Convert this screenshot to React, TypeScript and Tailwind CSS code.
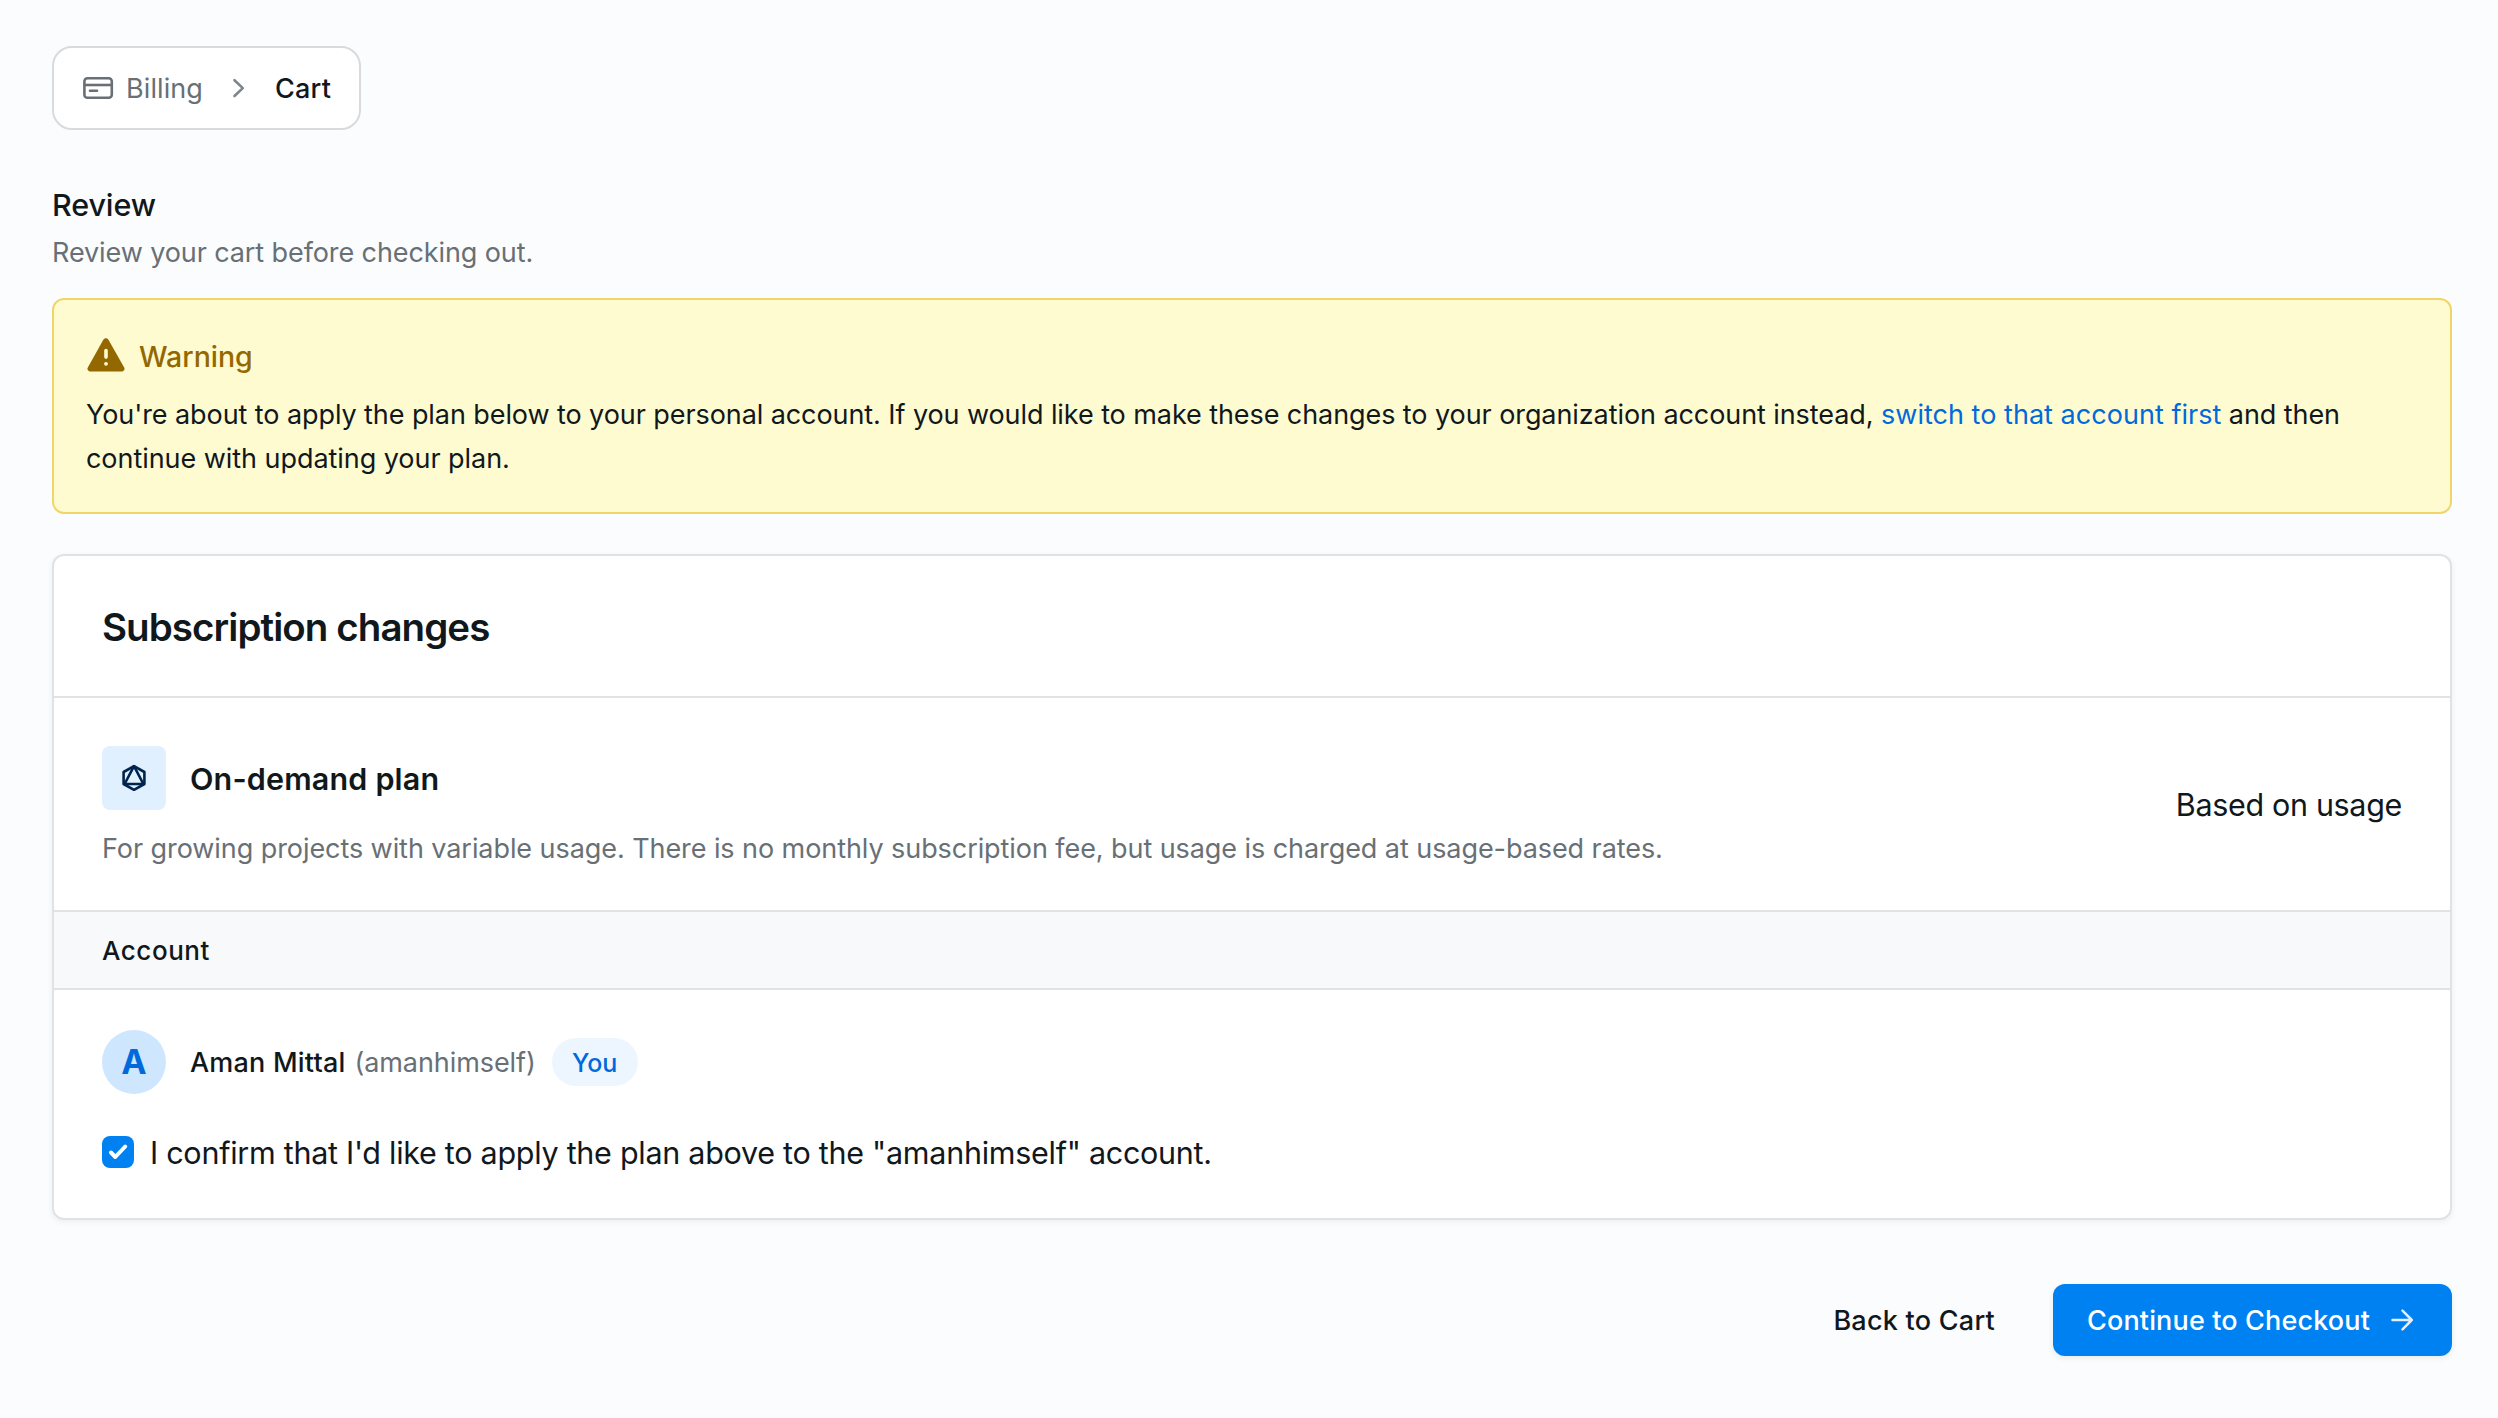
function CardIcon() {
  return (
    <svg className="h-8 w-8" viewBox="0 0 32 32" fill="none" stroke="currentColor" strokeWidth="2.6">
      <rect x="2.4" y="6.2" width="27.4" height="19.6" rx="3" />
      <path d="M2.4 13h27.4" />
      <path d="M8 18.700h7" strokeLinecap="round" />
    </svg>
  );
}

function WarningIcon() {
  return (
    <svg className="h-[34px] w-[38px]" viewBox="0 0 38 34">
      <path
        d="M16.200 1.900c1.200-2.100 4.200-2.100 5.400 0l15.600 27.600c1 1.800-.2 4-2.300 4H3.100c-2.100 0-3.300-2.200-2.300-4z"
        fill="#946800"
      />
      <path d="M19 12.600v6.500" stroke="#fffbd1" strokeWidth="3.600" strokeLinecap="round" />
      <circle cx="19" cy="25.800" r="1.900" fill="#fffbd1" />
    </svg>
  );
}

function PlanIcon() {
  return (
    <svg className="h-8 w-8" viewBox="0 0 32 32" fill="none" stroke="#00254d" strokeWidth="2.600" strokeLinejoin="round">
      <path d="M16 4.200 26.400 10v12L16 27.800 5.600 22V10z" />
      <path d="M16 4.200 25.400 22H6.600z" />
    </svg>
  );
}

export default function App() {
  return (
    <main className="flex h-[1418px] w-full flex-col bg-[#fbfcfe] pl-[52px] pr-[46px] pt-[46px] font-['Inter',sans-serif] text-[27px] leading-[44px] text-[#11181c]">
      <div className="flex flex-col">
        <nav className="flex h-[84px] w-[309px] items-center rounded-[20px] border-2 border-[#d7dbdf] bg-white pl-[28px] text-[#687076]">
          <CardIcon />
          <span className="ml-3 pt-px tracking-[0.1px]">Billing</span>
          <svg className="ml-[28px] h-6 w-4" viewBox="0 0 16 24" fill="none" stroke="#7e868c" strokeWidth="2.600" strokeLinecap="round" strokeLinejoin="round">
            <path d="m3.500 4.200 8.300 7.900-8.300 7.900" />
          </svg>
          <span className="ml-[28px] pt-px font-medium tracking-[0.2px] text-[#11181c]">Cart</span>
        </nav>

        <h1 className="mt-[53px] text-[30.5px] font-medium leading-[44px] tracking-[-0.12px]">Review</h1>
        <p className="mt-1 tracking-[-0.1px] text-[#687076]">Review your cart before checking out.</p>

        <section className="mt-[23px] h-[216px] rounded-xl border-2 border-[#f0d56a] bg-[#fffbd1] px-8 pt-8">
          <div className="flex h-12 items-center gap-[14px] pl-px text-[28.5px] font-medium text-[#946800]">
            <div className="-mt-[2px]">
              <WarningIcon />
            </div>
            <span className="pt-px">Warning</span>
          </div>
          <p className="mt-[13px] tracking-[-0.08px]">
            You're about to apply the plan below to your personal account. If you would like to make these changes to your organization account instead,{" "}
            <a className="tracking-[0.03px] text-[#006adc]">switch to that account first</a> and then
            <br />
            <span className="tracking-[-0.05px]">continue with updating your plan.</span>
          </p>
        </section>

        <section className="mt-10 h-[666px] rounded-xl border-2 border-[#dfe3e6] bg-white shadow-[0_2px_6px_rgba(0,0,0,0.06)]">
          <div className="flex h-[142px] items-center border-b-2 border-[#dfe3e6] px-12 pt-0.5">
            <h2 className="text-[38.5px] font-semibold tracking-[-0.93px]">Subscription changes</h2>
          </div>
          <div className="flex h-[214px] items-center justify-between border-b-2 border-[#dfe3e6] px-12">
            <div className="pt-[9px]">
              <div className="flex items-center gap-6">
                <div className="flex h-16 w-16 items-center justify-center rounded-lg bg-[#e1f0ff]">
                  <PlanIcon />
                </div>
                <h3 className="pt-px text-[30.5px] font-semibold tracking-[0.17px]">On-demand plan</h3>
              </div>
              <p className="mt-[17px] tracking-[-0.07px] text-[#687076]">
                For growing projects with variable usage. There is no monthly subscription fee, but usage is charged at usage-based rates.
              </p>
            </div>
            <span className="pt-0.5 text-[30.5px] tracking-[-0.33px]">Based on usage</span>
          </div>
          <div className="flex h-[78px] items-center border-b-2 border-[#dfe3e6] bg-[#f8f9fb] px-12 pt-px text-[26px] font-medium tracking-[0.55px]">
            Account
          </div>
          <div className="px-12 pt-10">
            <div className="flex items-center">
              <div className="flex h-16 w-16 items-center justify-center rounded-full bg-[#cee7fe] text-[34px] font-bold text-[#006adc]">A</div>
              <span className="ml-6 pt-0.5 font-medium tracking-[0.2px]">Aman Mittal</span>
              <span className="ml-[9px] pt-0.5 tracking-[-0.08px] text-[#687076]">(amanhimself)</span>
              <span className="ml-4 flex h-12 w-[86px] items-center justify-center rounded-full bg-[#edf6ff] pt-0.5 text-[25px] font-medium text-[#006adc]">You</span>
            </div>
            <label className="mt-[42px] flex h-8 items-center">
              <span className="flex h-8 w-8 items-center justify-center rounded-lg bg-[#0081f1]">
                <svg className="h-8 w-8" viewBox="0 0 32 32" fill="none" stroke="white" strokeWidth="4" strokeLinecap="round" strokeLinejoin="round">
                  <path d="m9 16.500 4.300 4.500L23.200 10.500" />
                </svg>
              </span>
              <span className="ml-4 pt-0.5 text-[30.5px] tracking-[-0.275px]">
                I confirm that I'd like to apply the plan above to the "amanhimself" account.
              </span>
            </label>
          </div>
        </section>

        <div className="mt-16 flex justify-end">
          <button className="h-[72px] px-[58px] pt-0.5 font-medium tracking-[0.25px]">Back to Cart</button>
          <button className="flex h-[72px] w-[399px] items-center rounded-xl bg-[#0081f1] pl-[34px] font-medium tracking-[0.15px] text-white shadow-[0_2px_6px_rgba(0,0,0,0.08)]">
            <span className="pt-0.5">Continue to Checkout</span>
            <svg className="ml-[17px] h-8 w-8" viewBox="0 0 32 32" fill="none" stroke="#e3f1ff" strokeWidth="2.500" strokeLinecap="round" strokeLinejoin="round">
              <path d="M5.500 16h19.300M15.500 6.700l9.300 9.300-9.300 9.300" />
            </svg>
          </button>
        </div>
      </div>
    </main>
  );
}
